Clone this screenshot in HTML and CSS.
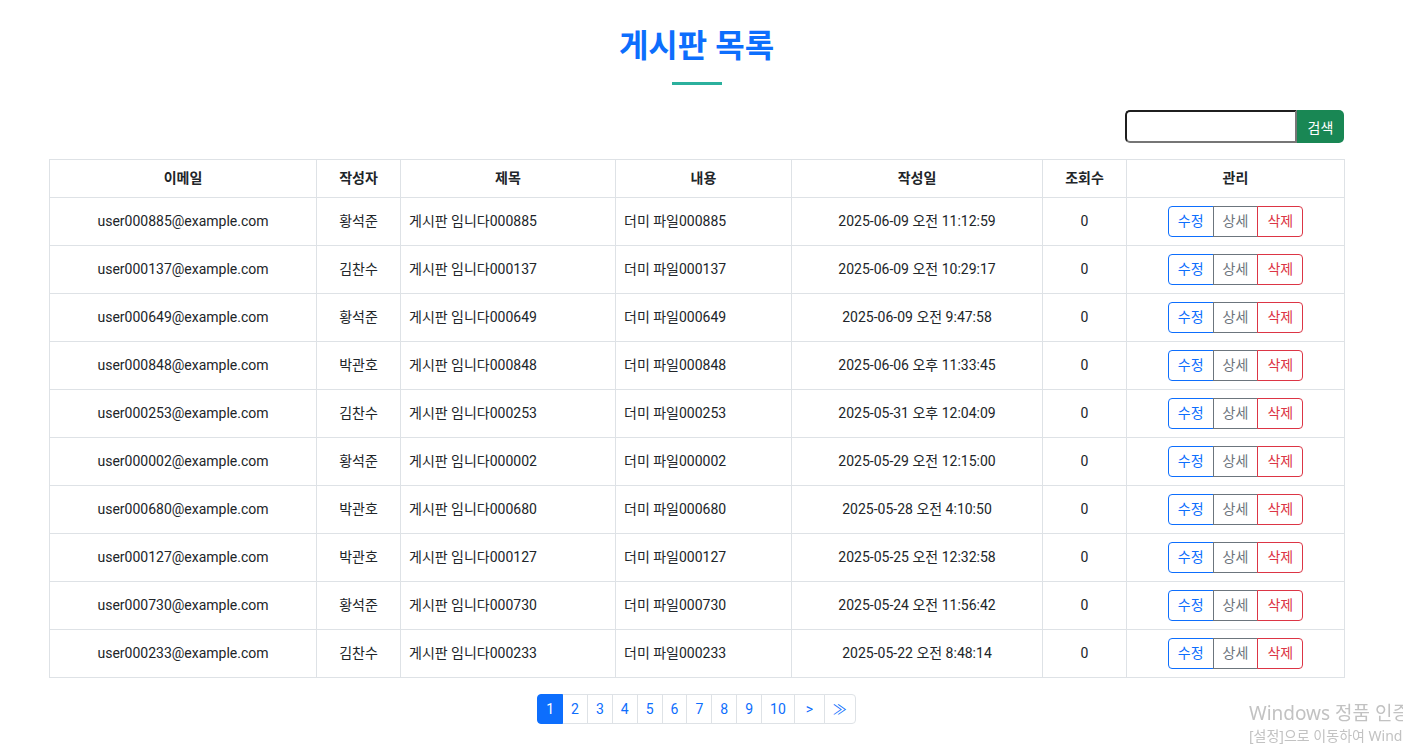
FILE: index.html
```html
<!DOCTYPE html>
<html lang="ko">
<head>
<meta charset="utf-8">
<title>게시판 목록</title>
<link rel="stylesheet" href="styles.css">
</head>
<body>
<div class="container">
  <h1 class="title">게시판 목록</h1>
  <div class="title-line"></div>
  <form class="search">
    <input type="text" class="search-input">
    <button type="button" class="search-btn">검색</button>
  </form>
  <table class="board">
    <colgroup>
      <col class="c-email"><col class="c-writer"><col class="c-title"><col class="c-content"><col class="c-date"><col class="c-views"><col class="c-manage">
    </colgroup>
    <thead>
      <tr><th>이메일</th><th>작성자</th><th>제목</th><th>내용</th><th>작성일</th><th>조회수</th><th>관리</th></tr>
    </thead>
    <tbody>
      <tr><td>user000885@example.com</td><td>황석준</td><td class="left">게시판 임니다000885</td><td class="left">더미 파일000885</td><td>2025-06-09 오전 11:12:59</td><td>0</td><td><div class="btns"><button class="b b-edit">수정</button><button class="b b-view">상세</button><button class="b b-del">삭제</button></div></td></tr>
      <tr><td>user000137@example.com</td><td>김찬수</td><td class="left">게시판 임니다000137</td><td class="left">더미 파일000137</td><td>2025-06-09 오전 10:29:17</td><td>0</td><td><div class="btns"><button class="b b-edit">수정</button><button class="b b-view">상세</button><button class="b b-del">삭제</button></div></td></tr>
      <tr><td>user000649@example.com</td><td>황석준</td><td class="left">게시판 임니다000649</td><td class="left">더미 파일000649</td><td>2025-06-09 오전 9:47:58</td><td>0</td><td><div class="btns"><button class="b b-edit">수정</button><button class="b b-view">상세</button><button class="b b-del">삭제</button></div></td></tr>
      <tr><td>user000848@example.com</td><td>박관호</td><td class="left">게시판 임니다000848</td><td class="left">더미 파일000848</td><td>2025-06-06 오후 11:33:45</td><td>0</td><td><div class="btns"><button class="b b-edit">수정</button><button class="b b-view">상세</button><button class="b b-del">삭제</button></div></td></tr>
      <tr><td>user000253@example.com</td><td>김찬수</td><td class="left">게시판 임니다000253</td><td class="left">더미 파일000253</td><td>2025-05-31 오후 12:04:09</td><td>0</td><td><div class="btns"><button class="b b-edit">수정</button><button class="b b-view">상세</button><button class="b b-del">삭제</button></div></td></tr>
      <tr><td>user000002@example.com</td><td>황석준</td><td class="left">게시판 임니다000002</td><td class="left">더미 파일000002</td><td>2025-05-29 오전 12:15:00</td><td>0</td><td><div class="btns"><button class="b b-edit">수정</button><button class="b b-view">상세</button><button class="b b-del">삭제</button></div></td></tr>
      <tr><td>user000680@example.com</td><td>박관호</td><td class="left">게시판 임니다000680</td><td class="left">더미 파일000680</td><td>2025-05-28 오전 4:10:50</td><td>0</td><td><div class="btns"><button class="b b-edit">수정</button><button class="b b-view">상세</button><button class="b b-del">삭제</button></div></td></tr>
      <tr><td>user000127@example.com</td><td>박관호</td><td class="left">게시판 임니다000127</td><td class="left">더미 파일000127</td><td>2025-05-25 오전 12:32:58</td><td>0</td><td><div class="btns"><button class="b b-edit">수정</button><button class="b b-view">상세</button><button class="b b-del">삭제</button></div></td></tr>
      <tr><td>user000730@example.com</td><td>황석준</td><td class="left">게시판 임니다000730</td><td class="left">더미 파일000730</td><td>2025-05-24 오전 11:56:42</td><td>0</td><td><div class="btns"><button class="b b-edit">수정</button><button class="b b-view">상세</button><button class="b b-del">삭제</button></div></td></tr>
      <tr><td>user000233@example.com</td><td>김찬수</td><td class="left">게시판 임니다000233</td><td class="left">더미 파일000233</td><td>2025-05-22 오전 8:48:14</td><td>0</td><td><div class="btns"><button class="b b-edit">수정</button><button class="b b-view">상세</button><button class="b b-del">삭제</button></div></td></tr>
    </tbody>
  </table>
  <nav class="pager">
    <ul class="pagination">
      <li class="page active"><a>1</a></li>
      <li class="page"><a>2</a></li>
      <li class="page"><a>3</a></li>
      <li class="page"><a>4</a></li>
      <li class="page"><a>5</a></li>
      <li class="page"><a>6</a></li>
      <li class="page"><a>7</a></li>
      <li class="page"><a>8</a></li>
      <li class="page"><a>9</a></li>
      <li class="page"><a>10</a></li>
      <li class="page page-next"><a>&gt;</a></li>
      <li class="page page-last"><a>&#8811;</a></li>
    </ul>
  </nav>
</div>
<div class="watermark">
  <div class="wm-1">Windows 정품 인증</div>
  <div class="wm-2">[설정]으로 이동하여 Windows를 정품 인증합니다.</div>
</div>
</body>
</html>
```

FILE: styles.css
```css
html, body {
  margin: 0;
  padding: 0;
  overflow: hidden;
}
body {
  font-family: Roboto, "Noto Sans CJK KR", sans-serif;
  font-size: 14px;
  line-height: 1.5;
  color: #212529;
  background: #fff;
}
.container {
  padding: 0 59px 0 49px;
}
.title {
  margin: 27px 0 0;
  text-align: center;
  font-size: 32px;
  font-weight: 700;
  line-height: 1.2;
  color: #0d6efd;
}
.title-line {
  width: 50px;
  height: 3px;
  background: #2bb09d;
  margin: 17px auto 0;
}
.search {
  display: flex;
  justify-content: flex-end;
  margin-top: 25px;
}
.search-input {
  box-sizing: border-box;
  width: 172px;
  height: 33px;
  border: 2px solid;
  border-color: #1f1f1f #767676 #767676 #1f1f1f;
  border-radius: 5px 0 0 5px;
  padding: 0 6px;
  outline: none;
  font: inherit;
}
.search-btn {
  box-sizing: border-box;
  width: 47px;
  height: 33px;
  border: 0;
  border-radius: 0 5px 5px 0;
  background: #198754;
  color: #fff;
  font-family: Roboto, "Noto Sans CJK KR", sans-serif;
  font-size: 14px;
  padding: 0;
}
.board {
  width: 100%;
  margin-top: 16px;
  border-collapse: collapse;
  table-layout: fixed;
}
.c-email { width: 267px; }
.c-writer { width: 84px; }
.c-title { width: 215px; }
.c-content { width: 176px; }
.c-date { width: 251px; }
.c-views { width: 84px; }
.c-manage { width: 218px; }
.board th, .board td {
  border: 1px solid #dee2e6;
  padding: 8px;
  text-align: center;
  vertical-align: middle;
  white-space: nowrap;
}
.board th {
  font-weight: 700;
}
.board td.left {
  text-align: left;
}
.btns {
  display: inline-flex;
}
.b {
  box-sizing: border-box;
  height: 31px;
  padding: 4px 9px;
  font-family: Roboto, "Noto Sans CJK KR", sans-serif;
  font-size: 14px;
  line-height: 21px;
  background: #fff;
  border: 1px solid;
  margin: 0;
}
.b + .b {
  margin-left: -1px;
}
.b-edit {
  color: #0d6efd;
  border-color: #0d6efd;
  border-radius: 4px 0 0 4px;
}
.b-view {
  color: #6c757d;
  border-color: #6c757d;
  border-radius: 0;
}
.b-del {
  color: #dc3545;
  border-color: #dc3545;
  border-radius: 0 4px 4px 0;
}
.pager {
  display: flex;
  justify-content: center;
  margin-top: 16px;
}
.pagination {
  display: flex;
  list-style: none;
  margin: 0;
  padding: 0;
}
.page a {
  display: block;
  box-sizing: border-box;
  height: 30px;
  padding: 4px 8px;
  line-height: 20px;
  font-size: 14px;
  text-align: center;
  color: #0d6efd;
  border: 1px solid #dee2e6;
  background: #fff;
}
.page + .page a {
  margin-left: -1px;
}
.page-next a {
  width: 31px;
}
.page-last a {
  width: 32px;
  padding: 4px 0;
}
.page:first-child a {
  border-radius: 4px 0 0 4px;
}
.page:last-child a {
  border-radius: 0 4px 4px 0;
}
.page.active a {
  background: #0d6efd;
  border-color: #0d6efd;
  color: #fff;
  position: relative;
  z-index: 1;
}
.watermark {
  position: fixed;
  left: 1249px;
  top: 700px;
  white-space: nowrap;
  color: #c2c2c2;
  font-family: "Noto Sans", "Noto Sans CJK KR", sans-serif;
}
.wm-1 {
  font-size: 19px;
  line-height: 26px;
}
.wm-2 {
  font-size: 14px;
  line-height: 20px;
}
```
